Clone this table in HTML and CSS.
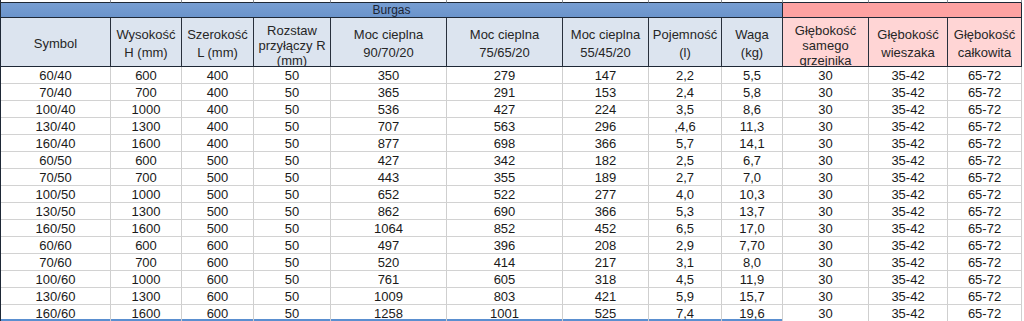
FILE: index.html
```html
<!DOCTYPE html>
<html lang="pl">
<head>
<meta charset="utf-8">
<title>Burgas</title>
<link rel="stylesheet" href="styles.css">
</head>
<body>
<div class="sheet">
  <div class="s"></div><div class="s"></div><div class="s"></div><div class="s"></div><div class="s"></div><div class="s"></div><div class="s"></div><div class="s"></div><div class="s"></div><div class="s"></div><div class="s"></div><div class="s"></div>

  <div class="band blue">Burgas</div>
  <div class="band pink"></div>

  <div class="h"><div class="hi">Symbol</div></div>
  <div class="h"><div class="hi">Wysokość<br>H (mm)</div></div>
  <div class="h"><div class="hi">Szerokość<br>L (mm)</div></div>
  <div class="h"><div class="hi t3">Rozstaw<br>przyłączy R<br>(mm)</div></div>
  <div class="h"><div class="hi">Moc cieplna<br>90/70/20</div></div>
  <div class="h"><div class="hi">Moc cieplna<br>75/65/20</div></div>
  <div class="h"><div class="hi">Moc cieplna<br>55/45/20</div></div>
  <div class="h"><div class="hi">Pojemność<br>(l)</div></div>
  <div class="h"><div class="hi">Waga<br>(kg)</div></div>
  <div class="h hp"><div class="hi t3">Głębokość<br>samego<br>grzejnika</div></div>
  <div class="h hp"><div class="hi">Głębokość<br>wieszaka</div></div>
  <div class="h hp"><div class="hi">Głębokość<br>całkowita</div></div>

  <div class="d">60/40</div><div class="d">600</div><div class="d">400</div><div class="d">50</div><div class="d">350</div><div class="d">279</div><div class="d">147</div><div class="d">2,2</div><div class="d">5,5</div><div class="d">30</div><div class="d">35-42</div><div class="d">65-72</div>
  <div class="d">70/40</div><div class="d">700</div><div class="d">400</div><div class="d">50</div><div class="d">365</div><div class="d">291</div><div class="d">153</div><div class="d">2,4</div><div class="d">5,8</div><div class="d">30</div><div class="d">35-42</div><div class="d">65-72</div>
  <div class="d">100/40</div><div class="d">1000</div><div class="d">400</div><div class="d">50</div><div class="d">536</div><div class="d">427</div><div class="d">224</div><div class="d">3,5</div><div class="d">8,6</div><div class="d">30</div><div class="d">35-42</div><div class="d">65-72</div>
  <div class="d">130/40</div><div class="d">1300</div><div class="d">400</div><div class="d">50</div><div class="d">707</div><div class="d">563</div><div class="d">296</div><div class="d">,4,6</div><div class="d">11,3</div><div class="d">30</div><div class="d">35-42</div><div class="d">65-72</div>
  <div class="d">160/40</div><div class="d">1600</div><div class="d">400</div><div class="d">50</div><div class="d">877</div><div class="d">698</div><div class="d">366</div><div class="d">5,7</div><div class="d">14,1</div><div class="d">30</div><div class="d">35-42</div><div class="d">65-72</div>
  <div class="d">60/50</div><div class="d">600</div><div class="d">500</div><div class="d">50</div><div class="d">427</div><div class="d">342</div><div class="d">182</div><div class="d">2,5</div><div class="d">6,7</div><div class="d">30</div><div class="d">35-42</div><div class="d">65-72</div>
  <div class="d">70/50</div><div class="d">700</div><div class="d">500</div><div class="d">50</div><div class="d">443</div><div class="d">355</div><div class="d">189</div><div class="d">2,7</div><div class="d">7,0</div><div class="d">30</div><div class="d">35-42</div><div class="d">65-72</div>
  <div class="d">100/50</div><div class="d">1000</div><div class="d">500</div><div class="d">50</div><div class="d">652</div><div class="d">522</div><div class="d">277</div><div class="d">4,0</div><div class="d">10,3</div><div class="d">30</div><div class="d">35-42</div><div class="d">65-72</div>
  <div class="d">130/50</div><div class="d">1300</div><div class="d">500</div><div class="d">50</div><div class="d">862</div><div class="d">690</div><div class="d">366</div><div class="d">5,3</div><div class="d">13,7</div><div class="d">30</div><div class="d">35-42</div><div class="d">65-72</div>
  <div class="d">160/50</div><div class="d">1600</div><div class="d">500</div><div class="d">50</div><div class="d">1064</div><div class="d">852</div><div class="d">452</div><div class="d">6,5</div><div class="d">17,0</div><div class="d">30</div><div class="d">35-42</div><div class="d">65-72</div>
  <div class="d">60/60</div><div class="d">600</div><div class="d">600</div><div class="d">50</div><div class="d">497</div><div class="d">396</div><div class="d">208</div><div class="d">2,9</div><div class="d">7,70</div><div class="d">30</div><div class="d">35-42</div><div class="d">65-72</div>
  <div class="d">70/60</div><div class="d">700</div><div class="d">600</div><div class="d">50</div><div class="d">520</div><div class="d">414</div><div class="d">217</div><div class="d">3,1</div><div class="d">8,0</div><div class="d">30</div><div class="d">35-42</div><div class="d">65-72</div>
  <div class="d">100/60</div><div class="d">1000</div><div class="d">600</div><div class="d">50</div><div class="d">761</div><div class="d">605</div><div class="d">318</div><div class="d">4,5</div><div class="d">11,9</div><div class="d">30</div><div class="d">35-42</div><div class="d">65-72</div>
  <div class="d">130/60</div><div class="d">1300</div><div class="d">600</div><div class="d">50</div><div class="d">1009</div><div class="d">803</div><div class="d">421</div><div class="d">5,9</div><div class="d">15,7</div><div class="d">30</div><div class="d">35-42</div><div class="d">65-72</div>
  <div class="d last">160/60</div><div class="d last">1600</div><div class="d last">600</div><div class="d last">50</div><div class="d last">1258</div><div class="d last">1001</div><div class="d last">525</div><div class="d last">7,4</div><div class="d last">19,6</div><div class="d">30</div><div class="d">35-42</div><div class="d">65-72</div>
</div>
</body>
</html>
```
FILE: styles.css
```css
html, body {
  margin: 0;
  padding: 0;
  overflow: hidden;
  background: #ffffff;
}

.sheet {
  display: grid;
  grid-template-columns: 110px 71px 72px 77px 116px 116px 86px 73px 61px 86px 79px 74px;
  grid-template-rows: 3px 15px 49px repeat(15, 17px);
  width: 1022px;
  box-sizing: border-box;
  border-left: 1px solid #1e2836;
  font-family: "Liberation Sans", Arial, sans-serif;
  font-size: 13px;
  color: #1a1a1a;
}

.sheet > div {
  box-sizing: border-box;
}

.s {
  border-right: 1px solid #8a8f96;
  border-bottom: 1px solid #1e2836;
}

.band {
  border-bottom: 1px solid #1e2836;
  border-right: 1px solid #1e2836;
  font-size: 12px;
  line-height: 14px;
  text-align: center;
  color: #1c2433;
}

.blue {
  grid-column: span 9;
  background: linear-gradient(#779ed2, #6b94cb);
}

.pink {
  grid-column: span 3;
  background: #fda2a2;
}

.h {
  background: #dce4ef;
  border-right: 1px solid #28303c;
  border-bottom: 1px solid #1e2836;
  overflow: hidden;
  color: #262626;
}

.hp {
  background: #ffd5d5;
}

.hi {
  height: 48px;
  display: flex;
  flex-direction: column;
  justify-content: center;
  align-items: center;
  text-align: center;
  line-height: 18px;
  padding-top: 3px;
  box-sizing: border-box;
}

.t3 {
  justify-content: flex-start;
  line-height: 15px;
  padding-top: 5px;
}

.d {
  border-right: 1px solid #cfcfcf;
  border-bottom: 1px solid #d2d2d2;
  text-align: center;
  line-height: 17px;
  white-space: nowrap;
}

.d.last {
  box-shadow: inset 0 -2px 0 #5a8fd0;
}
```
